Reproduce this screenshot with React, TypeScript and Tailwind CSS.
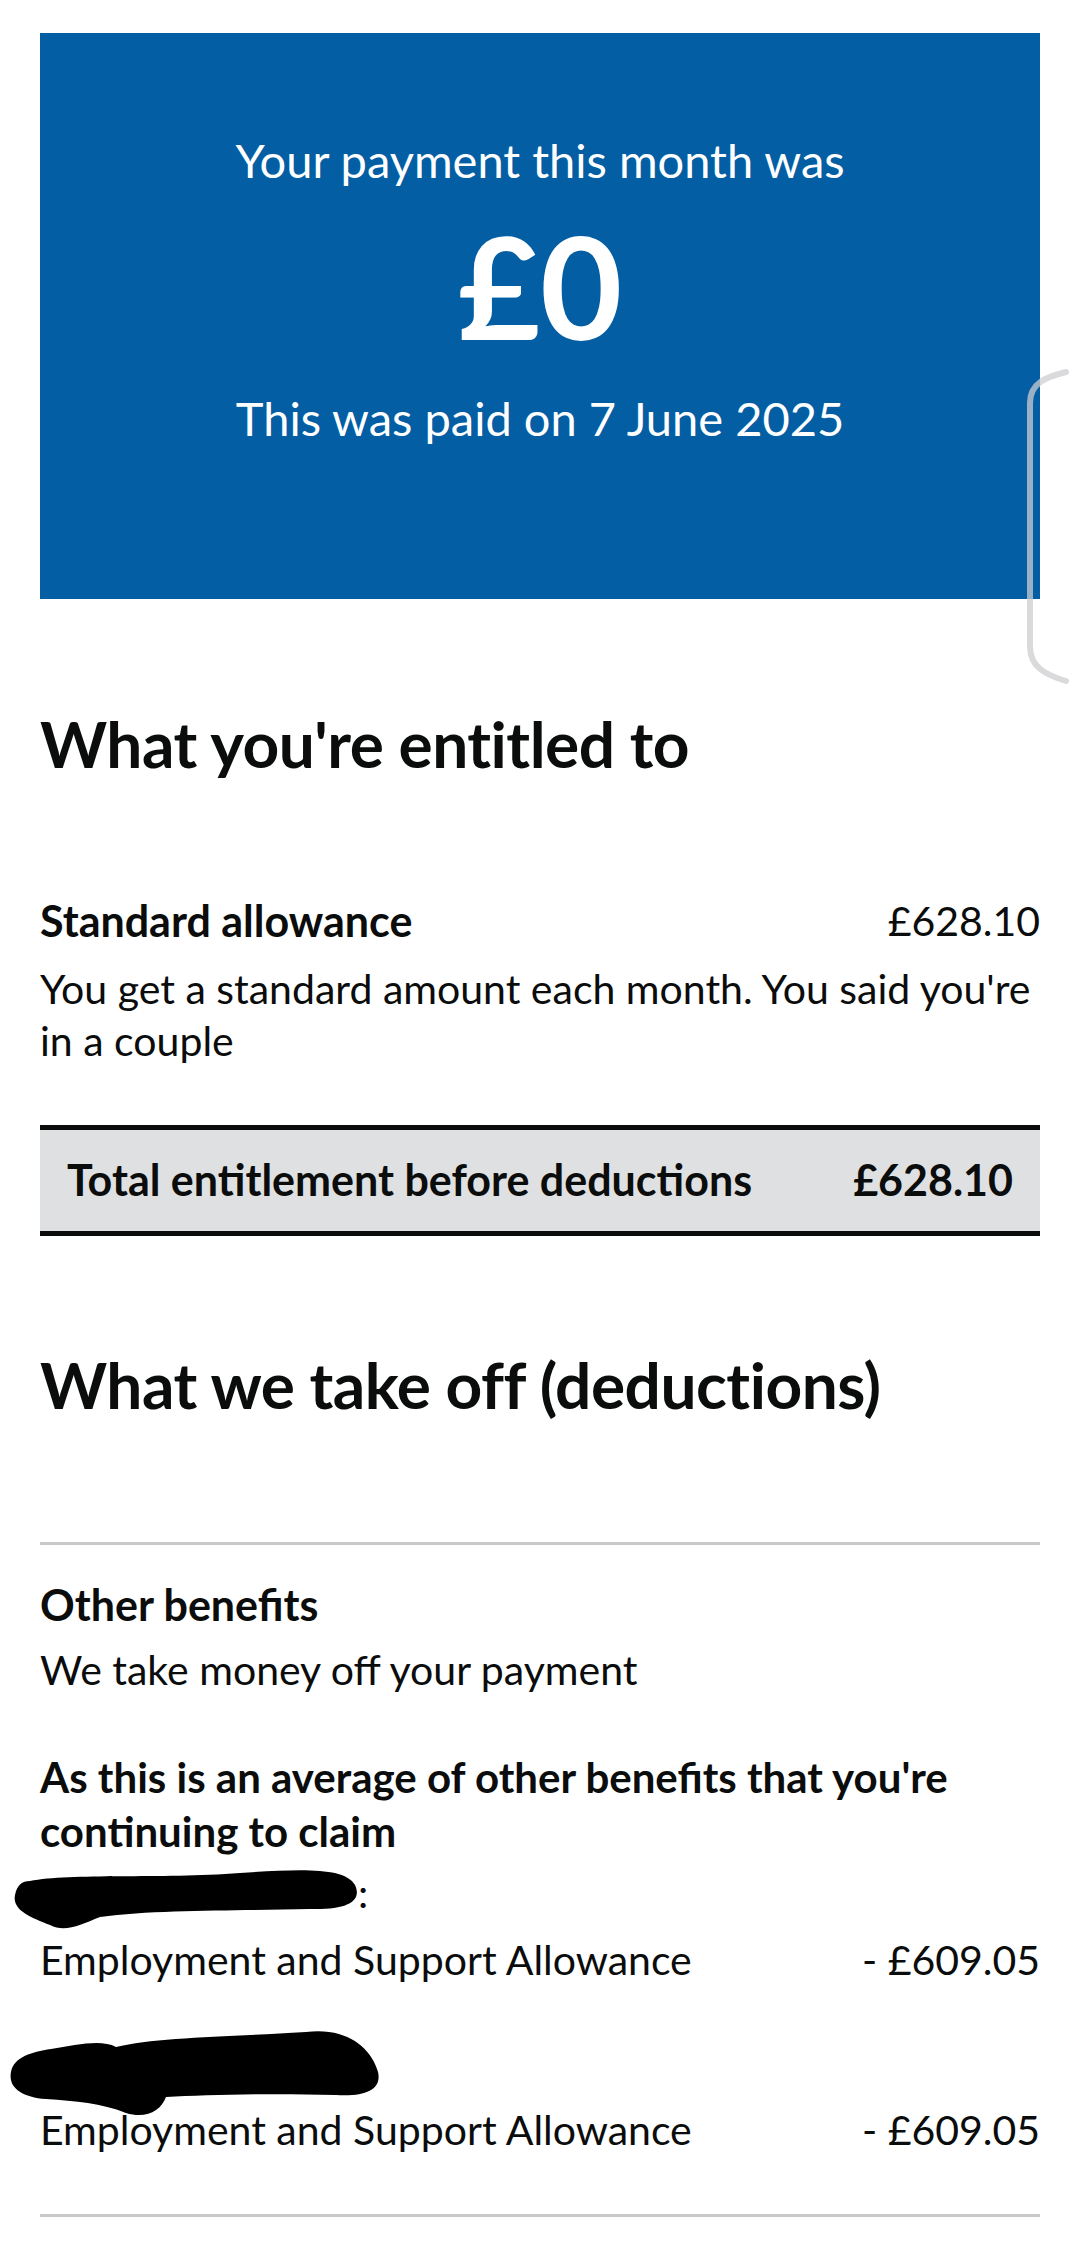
const font = { fontFamily: "Lato, 'Noto Sans', sans-serif" };

const RedactionOne = () => (
  <svg
    className="absolute left-[-30px] top-[-2px]"
    width="352"
    height="68"
    viewBox="0 0 352 68"
  >
    <path
      d="M20 16 C 60 8, 150 14, 230 8 C 290 4, 335 2, 345 20 C 352 35, 340 45, 300 44 C 230 46, 150 44, 90 52 C 70 60, 55 68, 40 60 C 20 52, 2 45, 5 30 C 7 20, 12 16, 20 16 Z"
      fill="#000"
    />
  </svg>
);

const RedactionTwo = () => (
  <svg
    className="absolute left-[-34px] top-[-10px]"
    width="376"
    height="92"
    viewBox="0 0 376 92"
  >
    <path
      d="M45 22 C 70 18, 95 12, 110 20 C 150 10, 220 10, 300 5 C 340 0, 365 20, 372 45 C 376 62, 360 70, 330 68 C 260 66, 200 68, 160 70 C 155 84, 140 92, 120 86 C 95 76, 70 74, 40 72 C 15 70, 2 60, 5 45 C 8 30, 25 25, 45 22 Z"
      fill="#000"
    />
  </svg>
);

export default function App() {
  return (
    <div
      className="relative min-h-[2259px] w-[1080px] bg-white px-10 text-[#0b0c0c]"
      style={font}
    >
      {/* payment panel */}
      <div className="mt-[33px] flex h-[566px] flex-col items-center bg-[#035ea4] pt-[97px] text-white">
        <p className="text-[47px] leading-[60px]">Your payment this month was</p>
        <p className="mt-[20px] text-[142px] font-bold leading-[150px]">£0</p>
        <p className="mt-[28px] text-[47px] leading-[60px]">
          This was paid on 7 June 2025
        </p>
      </div>

      {/* entitlement */}
      <h2 className="mt-[112px] text-[64px] font-bold leading-[66px] tracking-[-0.5px]">
        What you're entitled to
      </h2>

      <div className="mt-[118px] flex justify-between text-[41px] leading-[52px]">
        <span className="text-[43px] font-bold">Standard allowance</span>
        <span>£628.10</span>
      </div>
      <p className="mt-[16px] text-[41px] leading-[52px]">
        You get a standard amount each month. You said you're in a couple
      </p>

      <div className="mt-[58px] flex h-[111px] items-center justify-between border-y-[5px] border-[#0b0c0c] bg-[#dee0e2] px-[27px] text-[43px] font-bold">
        <span>Total entitlement before deductions</span>
        <span>£628.10</span>
      </div>

      {/* deductions */}
      <h2 className="mt-[116px] text-[64px] font-bold leading-[66px] tracking-[-0.5px]">
        What we take off (deductions)
      </h2>

      <div className="mt-[124px] h-[3px] bg-[#c8c9ca]" />

      <p className="mt-[34px] text-[43px] font-bold leading-[52px]">
        Other benefits
      </p>
      <p className="mt-[13px] text-[41px] leading-[52px]">
        We take money off your payment
      </p>

      <p className="mt-[54px] text-[42px] font-bold leading-[54px]">
        As this is an average of other benefits that you're continuing to claim
      </p>

      <div className="relative mt-[9px] flex text-[41px] leading-[52px]">
        <span className="inline-block w-[318px]" />
        <span>:</span>
        <RedactionOne />
      </div>
      <div className="mt-[15px] flex justify-between text-[41px] leading-[52px]">
        <span>Employment and Support Allowance</span>
        <span>- £609.05</span>
      </div>

      <div className="relative mt-[51px] h-[52px]">
        <RedactionTwo />
      </div>
      <div className="mt-[15px] flex justify-between text-[41px] leading-[52px]">
        <span>Employment and Support Allowance</span>
        <span>- £609.05</span>
      </div>

      <div className="mt-[58px] h-[3px] bg-[#c8c9ca]" />

      {/* edge handle overlay */}
      <svg
        className="absolute right-0 top-[334px]"
        width="54"
        height="320"
        viewBox="0 0 54 320"
      >
        <path
          d="M40 5 C 20 10, 4 16, 4 36 L 4 280 C 4 300, 20 308, 40 314"
          fill="none"
          stroke="rgba(205,205,208,0.75)"
          strokeWidth="6"
          strokeLinecap="round"
        />
      </svg>
    </div>
  );
}
